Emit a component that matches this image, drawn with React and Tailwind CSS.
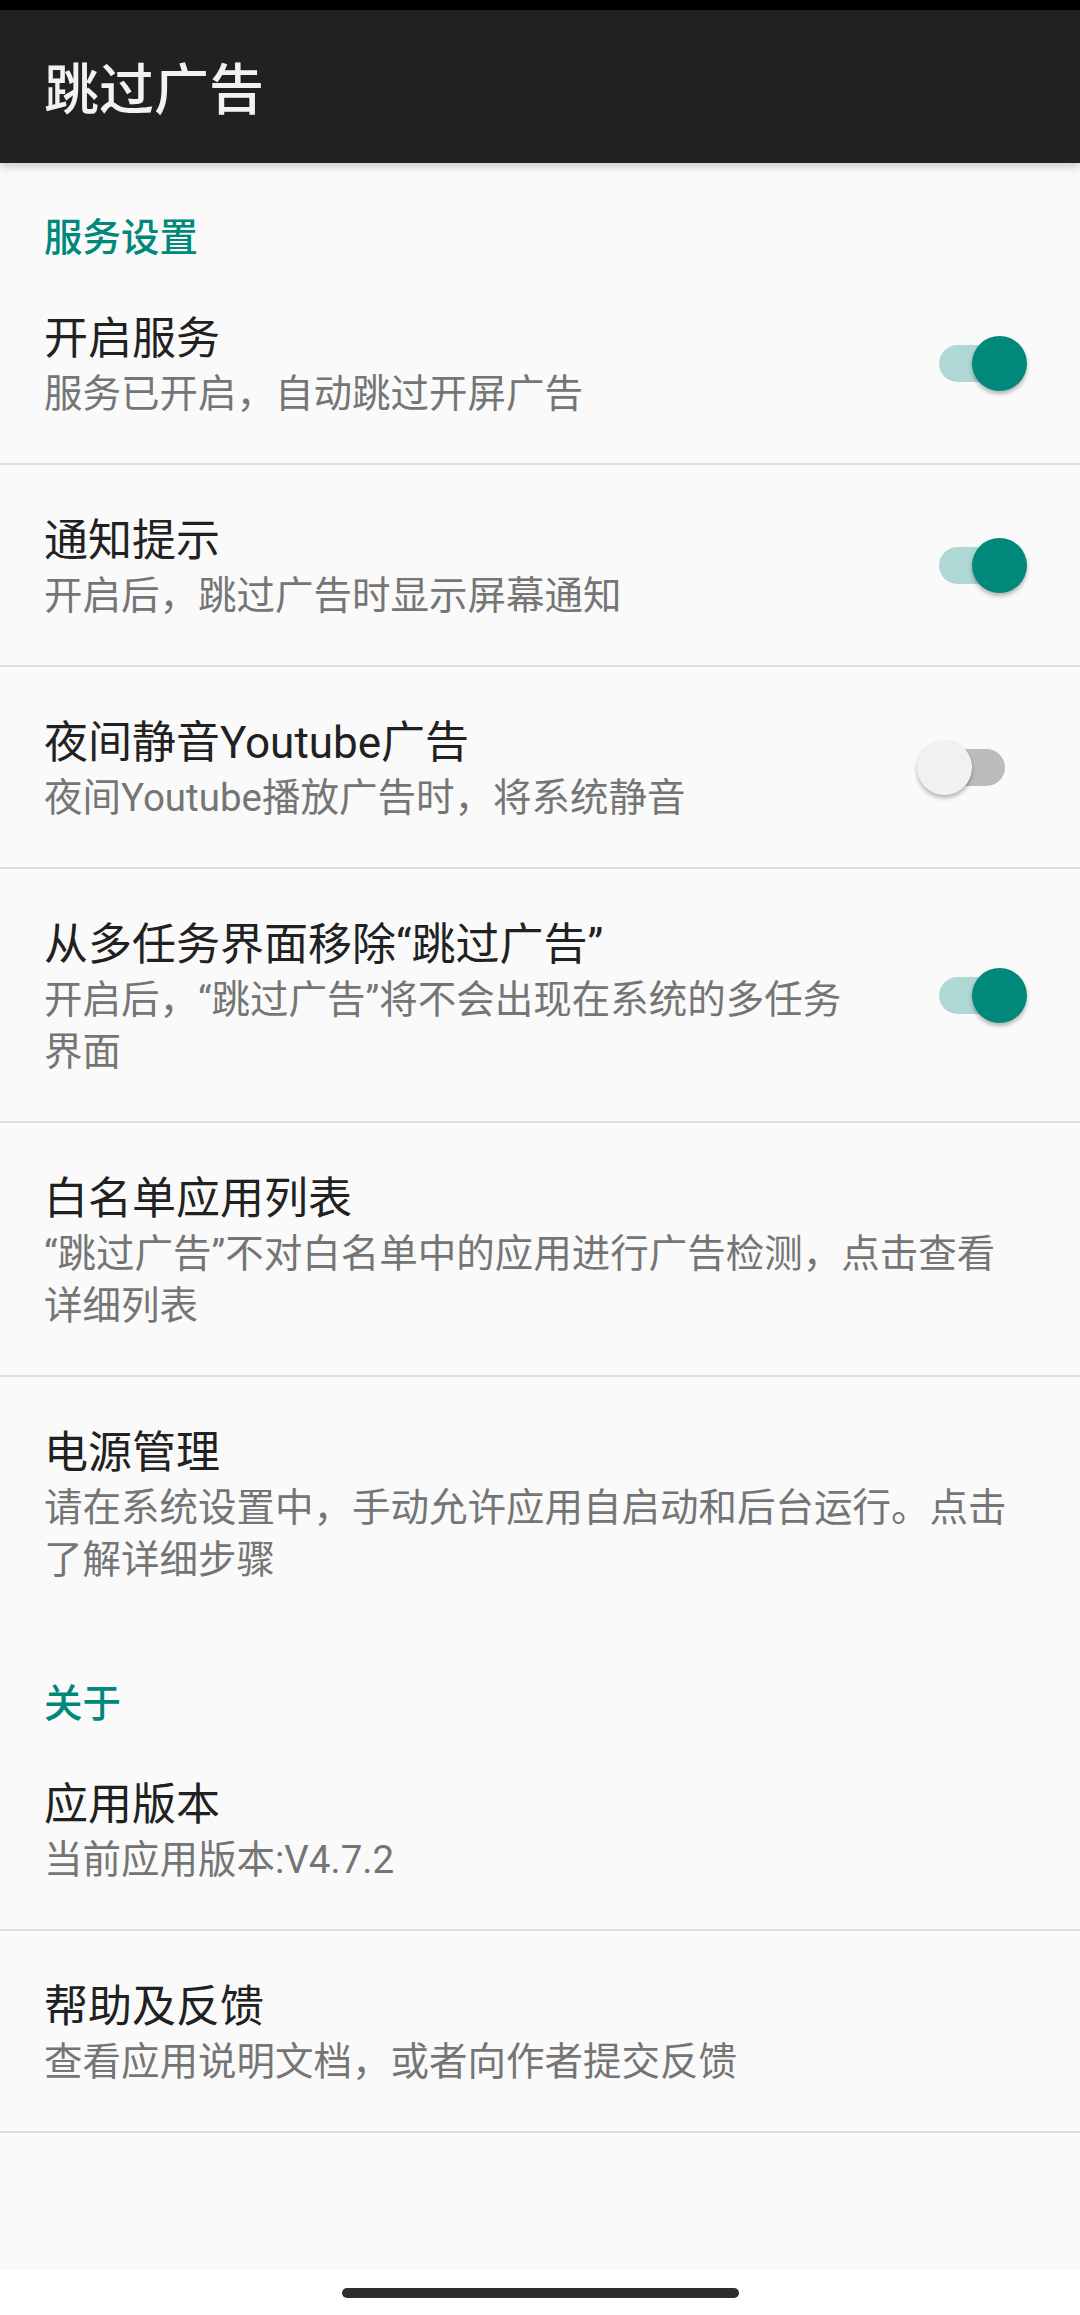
import React from "react";

const FONT = { fontFamily: 'Roboto, "Noto Sans CJK SC", sans-serif' };

function Switch({ on }) {
  return (
    <div className="relative w-[66px] h-[37px]">
      <div
        className={
          on
            ? "absolute inset-0 rounded-full bg-[#afd8d4]"
            : "absolute inset-0 rounded-full bg-[#bcbcbc]"
        }
      />
      <div
        className={
          on
            ? "absolute top-[-9px] left-[33px] w-[55px] h-[55px] rounded-full bg-[#00897b] shadow-[0_3px_4px_rgba(0,0,0,0.28)]"
            : "absolute top-[-9px] left-[-22px] w-[55px] h-[55px] rounded-full bg-[#f1f1f1] shadow-[0_3px_4px_rgba(0,0,0,0.28)]"
        }
      />
    </div>
  );
}

function Divider() {
  return <div className="h-[2px] bg-[#dedede]" />;
}

function Category({ children }) {
  return (
    <div className="h-[100px] pt-[53px] pl-[44px] text-[38.5px] leading-[44px] font-medium text-[#00897b]">
      {children}
    </div>
  );
}

function Row({ title, summary, sw }) {
  return (
    <div className="flex items-center">
      <div
        className={
          sw
            ? "flex-1 min-w-0 pl-[44px] pt-[47px] pb-[43px]"
            : "flex-1 min-w-0 pl-[44px] pr-[30px] pt-[47px] pb-[43px]"
        }
      >
        <div className="text-[44px] leading-[58px] text-[#212121] whitespace-nowrap">
          {title}
        </div>
        <div className="text-[38.5px] leading-[52px] text-[#757575]">
          {summary}
        </div>
      </div>
      {sw !== undefined && (
        <div className="w-[216px] shrink-0 flex pl-[75px]">
          <Switch on={sw} />
        </div>
      )}
    </div>
  );
}

export default function App() {
  return (
    <div className="w-[1080px] h-[2315px] flex flex-col bg-[#fafafa]" style={FONT}>
      <div className="h-[10px] bg-black shrink-0" />
      <div className="relative z-10 h-[153px] shrink-0 bg-[#212121] flex items-center pt-[8px] pl-[44px] shadow-[0_4px_8px_rgba(0,0,0,0.18)]">
        <span className="text-[55px] leading-[55px] font-medium text-[#f2f2f2]">跳过广告</span>
      </div>
      <div className="flex-1 flex flex-col">
        <Category>服务设置</Category>
        <Row title="开启服务" summary="服务已开启，自动跳过开屏广告" sw={true} />
        <Divider />
        <Row title="通知提示" summary="开启后，跳过广告时显示屏幕通知" sw={true} />
        <Divider />
        <Row title="夜间静音Youtube广告" summary="夜间Youtube播放广告时，将系统静音" sw={false} />
        <Divider />
        <Row
          title="从多任务界面移除“跳过广告”"
          summary={
            <>
              开启后，“跳过广告”将不会出现在系统的多任务
              <br />
              界面
            </>
          }
          sw={true}
        />
        <Divider />
        <Row
          title="白名单应用列表"
          summary={
            <>
              “跳过广告”不对白名单中的应用进行广告检测，点击查看
              <br />
              详细列表
            </>
          }
        />
        <Divider />
        <Row
          title="电源管理"
          summary={
            <>
              请在系统设置中，手动允许应用自启动和后台运行。点击
              <br />
              了解详细步骤
            </>
          }
        />
        <Category>关于</Category>
        <Row title="应用版本" summary="当前应用版本:V4.7.2" />
        <Divider />
        <Row title="帮助及反馈" summary="查看应用说明文档，或者向作者提交反馈" />
        <Divider />
      </div>
      <div className="h-[45px] shrink-0 bg-white flex items-start justify-center pt-[18px]">
        <div className="w-[397px] h-[10px] rounded-full bg-[#2e2e2e]" />
      </div>
    </div>
  );
}
